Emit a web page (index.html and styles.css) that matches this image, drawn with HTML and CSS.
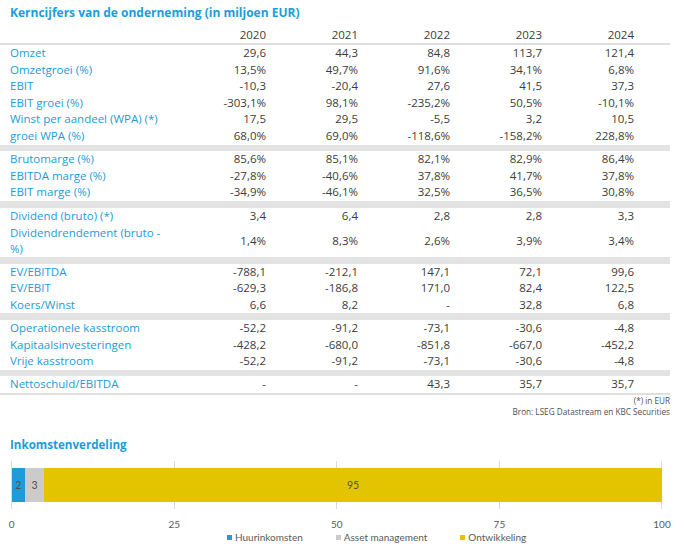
FILE: index.html
```html
<!DOCTYPE html>
<html lang="nl">
<head>
<meta charset="utf-8">
<title>Kerncijfers</title>
<link rel="stylesheet" href="styles.css">
</head>
<body>
<div class="page">
  <h1 class="title">Kerncijfers van de onderneming (in miljoen EUR)</h1>
  <div class="table">
    <div class="row head"><span></span><span class="num">2020</span><span class="num">2021</span><span class="num">2022</span><span class="num">2023</span><span class="num">2024</span></div>

    <div class="group">
      <div class="row"><span class="lbl">Omzet</span><span class="num">29,6</span><span class="num">44,3</span><span class="num">84,8</span><span class="num">113,7</span><span class="num">121,4</span></div>
      <div class="row"><span class="lbl">Omzetgroei (%)</span><span class="num">13,5%</span><span class="num">49,7%</span><span class="num">91,6%</span><span class="num">34,1%</span><span class="num">6,8%</span></div>
      <div class="row"><span class="lbl">EBIT</span><span class="num">-10,3</span><span class="num">-20,4</span><span class="num">27,6</span><span class="num">41,5</span><span class="num">37,3</span></div>
      <div class="row"><span class="lbl">EBIT groei (%)</span><span class="num">-303,1%</span><span class="num">98,1%</span><span class="num">-235,2%</span><span class="num">50,5%</span><span class="num">-10,1%</span></div>
      <div class="row"><span class="lbl">Winst per aandeel (WPA) (*)</span><span class="num">17,5</span><span class="num">29,5</span><span class="num">-5,5</span><span class="num">3,2</span><span class="num">10,5</span></div>
      <div class="row"><span class="lbl">groei WPA (%)</span><span class="num">68,0%</span><span class="num">69,0%</span><span class="num">-118,6%</span><span class="num">-158,2%</span><span class="num">228,8%</span></div>
    </div>
    <div class="band"></div>
    <div class="group">
      <div class="row"><span class="lbl">Brutomarge (%)</span><span class="num">85,6%</span><span class="num">85,1%</span><span class="num">82,1%</span><span class="num">82,9%</span><span class="num">86,4%</span></div>
      <div class="row"><span class="lbl">EBITDA marge (%)</span><span class="num">-27,8%</span><span class="num">-40,6%</span><span class="num">37,8%</span><span class="num">41,7%</span><span class="num">37,8%</span></div>
      <div class="row"><span class="lbl">EBIT marge (%)</span><span class="num">-34,9%</span><span class="num">-46,1%</span><span class="num">32,5%</span><span class="num">36,5%</span><span class="num">30,8%</span></div>
    </div>
    <div class="band"></div>
    <div class="group">
      <div class="row"><span class="lbl">Dividend (bruto) (*)</span><span class="num">3,4</span><span class="num">6,4</span><span class="num">2,8</span><span class="num">2,8</span><span class="num">3,3</span></div>
      <div class="row tall"><span class="lbl">Dividendrendement (bruto -<br>%)</span><span class="num">1,4%</span><span class="num">8,3%</span><span class="num">2,6%</span><span class="num">3,9%</span><span class="num">3,4%</span></div>
    </div>
    <div class="band"></div>
    <div class="group">
      <div class="row"><span class="lbl">EV/EBITDA</span><span class="num">-788,1</span><span class="num">-212,1</span><span class="num">147,1</span><span class="num">72,1</span><span class="num">99,6</span></div>
      <div class="row"><span class="lbl">EV/EBIT</span><span class="num">-629,3</span><span class="num">-186,8</span><span class="num">171,0</span><span class="num">82,4</span><span class="num">122,5</span></div>
      <div class="row"><span class="lbl">Koers/Winst</span><span class="num">6,6</span><span class="num">8,2</span><span class="num">-</span><span class="num">32,8</span><span class="num">6,8</span></div>
    </div>
    <div class="band"></div>
    <div class="group">
      <div class="row"><span class="lbl">Operationele kasstroom</span><span class="num">-52,2</span><span class="num">-91,2</span><span class="num">-73,1</span><span class="num">-30,6</span><span class="num">-4,8</span></div>
      <div class="row"><span class="lbl">Kapitaalsinvesteringen</span><span class="num">-428,2</span><span class="num">-680,0</span><span class="num">-851,8</span><span class="num">-667,0</span><span class="num">-452,2</span></div>
      <div class="row"><span class="lbl">Vrije kasstroom</span><span class="num">-52,2</span><span class="num">-91,2</span><span class="num">-73,1</span><span class="num">-30,6</span><span class="num">-4,8</span></div>
    </div>
    <div class="band"></div>
    <div class="group last">
      <div class="row"><span class="lbl">Nettoschuld/EBITDA</span><span class="num">-</span><span class="num">-</span><span class="num">43,3</span><span class="num">35,7</span><span class="num">35,7</span></div>
    </div>
  </div>
  <div class="notes">
    <p>(*) in EUR</p>
    <p>Bron: LSEG Datastream en KBC Securities</p>
  </div>

  <h2 class="title sub">Inkomstenverdeling</h2>
  <div class="chart">
    <div class="plot">
      <span class="grid" style="left:0%"></span>
      <span class="grid" style="left:25%"></span>
      <span class="grid" style="left:50%"></span>
      <span class="grid" style="left:75%"></span>
      <span class="grid" style="left:100%"></span>
      <div class="bar">
        <div class="seg s1" style="width:2%">2</div>
        <div class="seg s2" style="width:3%">3</div>
        <div class="seg s3" style="width:95%">95</div>
      </div>
    </div>
    <div class="axis">
      <span style="left:0%">0</span>
      <span style="left:25%">25</span>
      <span style="left:50%">50</span>
      <span style="left:75%">75</span>
      <span style="left:100%">100</span>
    </div>
    <div class="legend">
      <span class="item"><i class="sw s1"></i>Huurinkomsten</span>
      <span class="item"><i class="sw s2"></i>Asset management</span>
      <span class="item"><i class="sw s3"></i>Ontwikkeling</span>
    </div>
  </div>
</div>
</body>
</html>
```

FILE: styles.css
```css
* { box-sizing: border-box; }
html, body { margin: 0; padding: 0; background: #ffffff; }
body {
  font-family: "Open Sans", "Noto Sans", sans-serif;
  color: #404040;
  width: 686px;
  height: 553px;
  overflow: hidden;
}
.page { width: 686px; }

.title {
  margin: 0;
  padding-left: 10px;
  font-size: 12px;
  font-weight: 700;
  line-height: 26px;
  height: 26px;
  color: #1b9dd9;
}

.table { width: 670px; font-size: 11.5px; }
.row {
  display: grid;
  grid-template-columns: 210px repeat(5, 92px);
  align-items: center;
  height: 16.6px;
  line-height: 16.6px;
}
.row.head { height: 19px; line-height: 17px; border-bottom: 2px solid #e0e0e0; }
.row.tall { height: 32.5px; line-height: 15.6px; }
.lbl { padding-left: 10px; color: #1d9bd8; white-space: nowrap; }
.num { text-align: right; padding-right: 36px; color: #3c3c3c; }
.band { height: 6.7px; background: #e3e3e3; }
.group.last { border-bottom: 2px solid #e0e0e0; }

.notes {
  width: 670px;
  text-align: right;
  font-size: 8.2px;
  line-height: 11px;
  color: #505050;
}
.notes p { margin: 0; }

.sub { margin-top: 17px; height: 22px; line-height: 22px; font-size: 11.6px; }

.chart { padding-top: 5px; }
.plot {
  position: relative;
  margin-left: 11.7px;
  width: 650.3px;
  height: 48px;
  padding-top: 7px;
}
.grid {
  position: absolute;
  top: 0;
  bottom: 0;
  width: 1px;
  margin-left: -0.5px;
  background: #d9d9d9;
}
.bar {
  position: relative;
  display: flex;
  height: 34px;
}
.seg {
  display: flex;
  align-items: center;
  justify-content: center;
  font-family: Lato, "Open Sans", sans-serif;
  font-size: 10.5px;
  color: #505050;
}
.s1 { background: #1f9bd9; }
.s2 { background: #cbcbcb; }
.s3 { background: #e2c500; }

.axis {
  position: relative;
  margin-left: 11.7px;
  width: 650.3px;
  height: 15px;
  margin-top: 8px;
  font-family: Lato, "Open Sans", sans-serif;
  font-size: 10px;
  line-height: 15px;
  color: #595959;
}
.axis span { position: absolute; top: 0; transform: translateX(-50%); }

.legend {
  display: flex;
  gap: 33px;
  padding-left: 227px;
  margin-top: -1px;
  font-family: Lato, "Open Sans", sans-serif;
  font-size: 10px;
  line-height: 13px;
  color: #595959;
}
.item { display: flex; align-items: center; gap: 3px; }
.sw { display: block; width: 5px; height: 5px; }
```
